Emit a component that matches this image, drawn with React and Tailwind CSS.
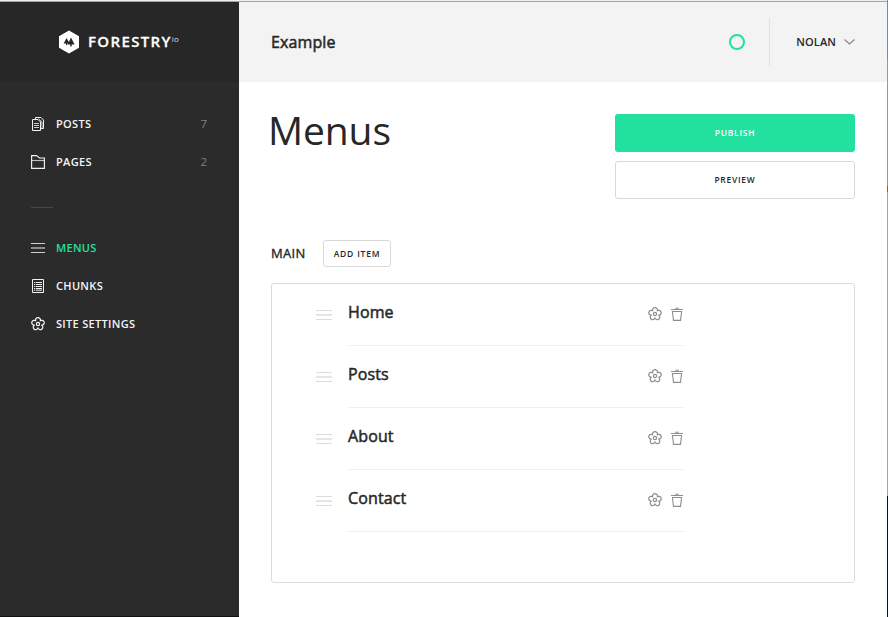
function Gear({ className }) {
  return (
    <svg className={className} width="14" height="14" viewBox="0 0 14 14" fill="none" stroke="currentColor" strokeWidth="1.2" strokeLinejoin="round">
      <path d="M4.71 3.84A2.44 2.44 0 1 1 9.29 3.84A2.44 2.44 0 1 1 10.71 8.2A2.44 2.44 0 1 1 7 10.9A2.44 2.44 0 1 1 3.29 8.2A2.44 2.44 0 1 1 4.71 3.84Z" />
      <circle cx="7" cy="7" r="1.6" />
    </svg>
  );
}

function Trash() {
  return (
    <svg width="12" height="14" viewBox="0 0 12 14" fill="none" stroke="currentColor" strokeWidth="1.1">
      <path d="M0 2.5H12M4.2 1.2H7.8M1.4 4.5L2.5 13.4H9.5L10.6 4.5Z" />
    </svg>
  );
}

function PostsIcon() {
  return (
    <svg width="14" height="14" viewBox="0 0 14 14" fill="none" stroke="#f2f2f2">
      <path d="M1.5 2.5H7L9.5 5V13.5H1.5ZM4.5 2V.5H10L12.5 3V11.5H10" />
      <path d="M7.5 1.8L11 5V11M3 6.5H8M3 8.5H8M3 10.5H8" strokeOpacity=".8" />
    </svg>
  );
}

function PagesIcon() {
  return (
    <svg width="14" height="14" viewBox="0 0 14 14" fill="none" stroke="#f2f2f2" strokeWidth="1.15">
      <path d="M.6 13.4V.6H5.5L8.5 3H13.4V13.4Z" />
      <path d="M.5 5.5H13.5" strokeOpacity=".75" />
    </svg>
  );
}

function MenusIcon() {
  return (
    <svg width="14" height="14" viewBox="0 0 14 14">
      <path d="M0 2h14v1H0zM0 11h14v1H0z" fill="#cfcfcf" />
      <path d="M0 6h14v2H0z" fill="#8c8c8c" />
    </svg>
  );
}

function ChunksIcon() {
  return (
    <svg width="14" height="14" viewBox="0 0 14 14" fill="none" stroke="#f2f2f2">
      <path d="M1.5.5H12.5V13.5H1.5ZM3 3.5H4.3M5 3.5H11M3 5.5H4.3M5 5.5H11M3 7.5H4.3M5 7.5H11M3 9.5H4.3M5 9.5H11M3 11.2H4.3M5 11.2H11" />
    </svg>
  );
}

function NavItem({ icon, label, count, active }) {
  return (
    <div className="flex h-[38px] items-center pr-8 pl-[31px]">
      {icon}
      <span className={"ml-[11px] text-[11px] font-semibold tracking-[0.32px] " + (active ? "text-[#22e19f]" : "text-[#f5f5f5]")}>{label}</span>
      {count && <span className="ml-auto text-[11.5px] text-[#808080]">{count}</span>}
    </div>
  );
}

function Row({ label }) {
  return (
    <div className="flex h-[62px]">
      <svg className="mt-[25px] mr-4" width="16" height="12" viewBox="0 0 16 12">
        <path d="M0 1h16v1H0zM0 10h16v1H0z" fill="#dcdcdc" />
        <path d="M0 5h16v2H0z" fill="#e6e6e6" />
      </svg>
      <div className="flex w-[336px] border-b border-[#efefef] text-[#8e8e8e]">
        <span className="mt-4 text-base leading-6 tracking-[0.12px] text-[#272727] [-webkit-text-stroke:0.5px_#272727]">{label}</span>
        <Gear className="mt-[23px] mr-[9px] ml-auto" />
        <span className="mt-[23px] mr-px"><Trash /></span>
      </div>
    </div>
  );
}

export default function App() {
  return (
    <div className="flex h-[617px] w-[888px] overflow-hidden bg-white font-['Open_Sans',sans-serif] text-[#272727]">
      <div className="flex w-[887px] flex-col">
        <div className="h-0.5 shrink-0 border-b border-[#a5a5a5] bg-[#eee]" />
        <div className="flex flex-1">
          <aside className="w-[239px] border-b border-[#111] bg-[#2b2b2b]">
            <div className="flex h-20 items-center bg-[#272727] pl-[59px]">
              <svg width="20" height="24" viewBox="0 0 20 24">
                <path d="M10 .5L20 6.2V17.8L10 23.5L0 17.8V6.2Z" fill="#fff" />
                <path d="M7.6 8L10.6 13.4H8.2V15H7V13.4H4.6ZM12 7.5L15.6 14.6H12.7V16.4H11.3V14.6H8.7Z" fill="#272727" />
              </svg>
              <span className="mb-px ml-[9px] text-[15px] font-semibold tracking-[1.35px] text-white [-webkit-text-stroke:0.3px_#fff]">FORESTRY</span>
              <span className="mb-1.5 text-[8px] leading-none tracking-[0.3px] text-[#ddd]">io</span>
            </div>
            <nav className="flex flex-col pt-[23px]">
              <NavItem icon={<PostsIcon />} label="POSTS" count="7" />
              <NavItem icon={<PagesIcon />} label="PAGES" count="2" />
              <div className="mt-[26px] mb-[21px] ml-[31px] h-px w-[22px] bg-[#484848]" />
              <NavItem icon={<MenusIcon />} label="MENUS" active />
              <NavItem icon={<ChunksIcon />} label="CHUNKS" />
              <NavItem icon={<Gear className="text-[#f2f2f2]" />} label="SITE SETTINGS" />
            </nav>
          </aside>
          <main className="flex flex-1 flex-col">
            <header className="flex h-20 items-center bg-[#f3f3f3] pr-8 pl-8">
              <span className="text-base tracking-[0.12px] [-webkit-text-stroke:0.5px_#272727]">Example</span>
              <span className="ml-auto h-4 w-4 rounded-full border-2 border-[#22e19f]" />
              <span className="ml-6 h-12 w-px bg-[#e2e2e2]" />
              <span className="ml-[26.5px] text-[11px] font-semibold tracking-[0.1px]">NOLAN</span>
              <svg className="ml-2" width="11" height="6" viewBox="0 0 11 6" fill="none" stroke="#858585" strokeWidth="1.1">
                <path d="M.5 .5L5.5 5L10.5 .5" />
              </svg>
            </header>
            <div className="flex justify-between pt-8 pr-8 pl-[29px]">
              <h1 className="-mt-3 text-[39px] leading-[56px] tracking-[-0.1px]">Menus</h1>
              <div className="flex w-60 flex-col gap-[9px] text-[8.4px] font-semibold tracking-[0.8px]">
                <button className="h-[38px] rounded-[3px] bg-[#22e19f] text-white">PUBLISH</button>
                <button className="h-[38px] rounded-[3px] border border-[#d8d8d8]">PREVIEW</button>
              </div>
            </div>
            <div className="mt-[41px] flex h-[27px] items-center pl-8">
              <span className="w-[52px] text-[13px] tracking-[0.3px] [-webkit-text-stroke:0.35px_#272727]">MAIN</span>
              <button className="h-[27px] w-[68px] rounded-[3px] border border-[#d8d8d8] pt-0.5 text-[8.5px] font-semibold tracking-[0.8px] whitespace-nowrap">ADD ITEM</button>
            </div>
            <div className="mt-4 ml-8 h-[300px] w-[584px] rounded-[3px] border border-[#dcdcdc] pl-11">
              <Row label="Home" />
              <Row label="Posts" />
              <Row label="About" />
              <Row label="Contact" />
            </div>
          </main>
        </div>
      </div>
      <div className="flex w-px flex-col">
        <div className="h-[60px] bg-[#7f8894]" />
        <div className="h-[126px] bg-[#999]" />
        <div className="h-1.5 bg-[#8b6738]" />
        <div className="h-[304px] bg-[#a2a2a2]" />
        <div className="flex-1 bg-[#07151d]" />
      </div>
    </div>
  );
}
